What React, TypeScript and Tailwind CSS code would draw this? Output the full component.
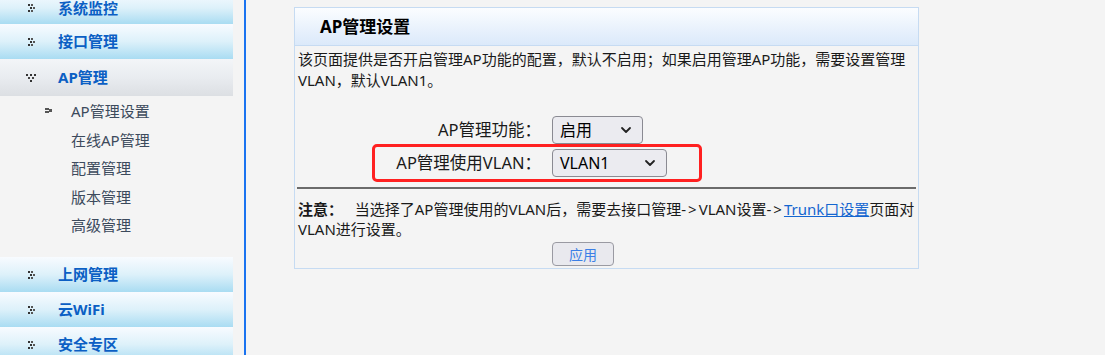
import React from "react";

const font = { fontFamily: '"Noto Sans", "Noto Sans CJK SC", sans-serif' };

function DotIcon() {
  return (
    <svg width="10" height="10" viewBox="0 0 10 10" className="shrink-0">
      <rect x="1" y="1" width="2" height="2" fill="#333" />
      <rect x="4" y="1" width="2" height="2" fill="#555" />
      <rect x="3" y="4" width="2" height="2" fill="#333" />
      <rect x="6" y="4" width="2" height="2" fill="#555" />
      <rect x="1" y="7" width="2" height="2" fill="#333" />
      <rect x="4" y="7" width="2" height="2" fill="#555" />
    </svg>
  );
}

function DownDotIcon() {
  return (
    <svg width="12" height="10" viewBox="0 0 12 10" className="shrink-0">
      <rect x="0" y="1" width="2" height="2" fill="#333" />
      <rect x="4" y="1" width="2" height="2" fill="#333" />
      <rect x="8" y="1" width="2" height="2" fill="#333" />
      <rect x="2" y="4" width="2" height="2" fill="#444" />
      <rect x="6" y="4" width="2" height="2" fill="#444" />
      <rect x="4" y="7" width="2" height="2" fill="#333" />
    </svg>
  );
}

function SubIcon() {
  return (
    <svg width="8" height="6" viewBox="0 0 8 6" className="shrink-0">
      <rect x="0" y="0" width="4" height="2" fill="#555" />
      <rect x="0" y="3" width="4" height="2" fill="#555" />
      <rect x="4" y="1" width="3" height="3" fill="#555" />
    </svg>
  );
}

function MenuItem({ label, h = "h-[35px]" }: { label: string; h?: string }) {
  return (
    <div
      className={`${h} shrink-0 w-[233px] flex items-center bg-gradient-to-b from-[#f8fbff] via-[#ddf1fa] to-[#a9dcf2]`}
    >
      <div className="w-[58px] pl-[27px] flex items-center">
        <DotIcon />
      </div>
      <span className="text-[15px] font-bold text-[#0b5fc4]">{label}</span>
    </div>
  );
}

function Chevron() {
  return (
    <svg width="12" height="8" viewBox="0 0 12 8" fill="none">
      <path d="M2 2 L6 6 L10 2" stroke="#222" strokeWidth="1.8" strokeLinecap="round" strokeLinejoin="round" />
    </svg>
  );
}

function SelectBox({ value, w }: { value: string; w: string }) {
  return (
    <div
      className={`${w} h-[28px] flex items-center justify-between border border-[#8a8a92] rounded-[4px] bg-[#ebebf0] pl-[7px] pr-[10px]`}
    >
      <span className="text-[16px] text-black">{value}</span>
      <Chevron />
    </div>
  );
}

export default function App() {
  const subs = ["AP管理设置", "在线AP管理", "配置管理", "版本管理", "高级管理"];
  return (
    <div className="w-[1105px] h-[355px] overflow-hidden bg-[#f4f4f4] flex" style={font}>
      {/* sidebar */}
      <div className="w-[244px] shrink-0 flex flex-col -mt-[8px]">
        <MenuItem label="系统监控" h="h-[32px]" />
        <MenuItem label="接口管理" h="h-[35px]" />
        <div className="h-[37px] shrink-0 w-[233px] flex items-center bg-gradient-to-b from-[#f3f5f8] via-[#e9ecf0] to-[#dcdfe3]">
          <div className="w-[58px] pl-[26px] flex items-center">
            <DownDotIcon />
          </div>
          <span className="text-[15px] font-bold text-[#0b5fc4]">AP管理</span>
        </div>
        <div className="h-[161px] shrink-0 pt-[1px] flex flex-col">
          {subs.map((s, i) => (
            <div key={s} className="h-[28.5px] shrink-0 flex items-center">
              <div className="w-[71px] pl-[45px] flex items-center">
                {i === 0 ? <SubIcon /> : null}
              </div>
              <span className="text-[15px] text-[#3c4a5c]">{s}</span>
            </div>
          ))}
        </div>
        <MenuItem label="上网管理" />
        <MenuItem label="云WiFi" />
        <MenuItem label="安全专区" />
      </div>
      <div className="w-[2px] shrink-0 bg-[#1a73f0]" />

      {/* main */}
      <div className="pl-[48px] pt-[7px]">
        <div className="w-[625px] border border-[#c6dbf2] flex flex-col">
          <div className="h-[38px] flex items-center pl-[25px] bg-gradient-to-b from-[#fbfdff] to-[#dbe9fa] border-b border-[#c6dbf2]">
            <span className="text-[17px] font-bold text-black">AP管理设置</span>
          </div>
          <div className="px-[3px] pt-[3px] text-[15px] leading-[21px] text-[#1a1a1a] whitespace-nowrap">
            该页面提供是否开启管理AP功能的配置，默认不启用；如果启用管理AP功能，需要设置管理
            <br />
            VLAN，默认VLAN1。
          </div>
          <div className="relative mt-[25px] flex flex-col gap-[5px]">
            <div className="flex items-center">
              <div className="w-[246px] text-right text-[16.5px] text-[#1a1a1a] whitespace-nowrap">AP管理功能：</div>
              <div className="ml-[11px]">
                <SelectBox value="启用" w="w-[91px]" />
              </div>
            </div>
            <div className="flex items-center">
              <div className="w-[246px] text-right text-[16.5px] text-[#1a1a1a] whitespace-nowrap">AP管理使用VLAN：</div>
              <div className="ml-[11px]">
                <SelectBox value="VLAN1" w="w-[115px]" />
              </div>
            </div>
            <div className="absolute left-[77px] top-[28px] w-[330px] h-[38px] border-[3px] border-[#ff2020] rounded-[5px]" />
          </div>
          <div className="mx-[2px] mt-[10px] h-[2px] bg-[#6b6b6b]" />
          <div className="px-[3px] pt-[10px] text-[15px] leading-[20px] text-[#1a1a1a] whitespace-nowrap">
            <span className="font-bold">注意：</span>&nbsp;&nbsp;&nbsp;当选择了AP管理使用的VLAN后，需要去接口管理
            <span className="tracking-[2px]">-&gt;</span>VLAN设置
            <span className="tracking-[2px]">-&gt;</span>
            <a className="text-[#1466d0] underline">Trunk口设置</a>页面对
            <br />
            VLAN进行设置。
          </div>
          <div className="flex justify-start pl-[257px] pt-[3px] pb-[2px]">
            <div className="w-[62px] h-[24px] flex items-center justify-center border border-[#9a9aa2] rounded-[4px] bg-[#e9e9ee] text-[14px] text-[#3b7fe6]">
              应用
            </div>
          </div>
        </div>
      </div>
    </div>
  );
}
